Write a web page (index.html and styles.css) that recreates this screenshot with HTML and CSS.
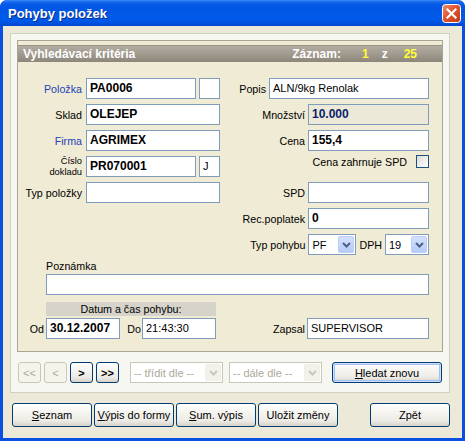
FILE: index.html
```html
<!DOCTYPE html>
<html lang="cs">
<head>
    <meta charset="UTF-8">
    <title>Pohyby položek</title>
    <link rel="stylesheet" href="styles.css">
</head>
<body>
    <div class="window">
        <div class="titlebar">
            <span class="title">Pohyby položek</span>
            <span class="close">
                <svg width="19" height="19" viewBox="0 0 19 19">
                    <defs>
                        <linearGradient id="cg" x1="0" y1="0" x2="1" y2="1">
                            <stop offset="0" stop-color="#f0906c"/>
                            <stop offset="0.45" stop-color="#e0532f"/>
                            <stop offset="1" stop-color="#c23a16"/>
                        </linearGradient>
                    </defs>
                    <rect x="0.5" y="0.5" width="18" height="18" rx="3" fill="url(#cg)" stroke="#fff"/>
                    <path d="M5.5 5.5 L13.5 13.5 M13.5 5.5 L5.5 13.5" stroke="#fff" stroke-width="2.2" stroke-linecap="square"/>
                </svg>
            </span>
        </div>

        <div class="client">
            <div class="frame">
                <div class="panel">
                    <div class="panel-head">
                        <span>Vyhledávací kritéria</span>
                        <span class="record">
                            <span>Záznam:</span>
                            <span class="yel one">1</span>
                            <span class="of">z</span>
                            <span class="yel total">25</span>
                        </span>
                    </div>

                    <div class="panel-body">
                        <div class="cols">
                            <div class="col-left">
                                <div class="row">
                                    <span class="lbl link">Položka</span>
                                    <div class="fld b w110">PA0006</div>
                                    <div class="fld w21 sp"></div>
                                </div>
                                <div class="row">
                                    <span class="lbl">Sklad</span>
                                    <div class="fld b w134">OLEJEP</div>
                                </div>
                                <div class="row">
                                    <span class="lbl link">Firma</span>
                                    <div class="fld b w134">AGRIMEX</div>
                                </div>
                                <div class="row">
                                    <span class="lbl small">Číslo<br>dokladu</span>
                                    <div class="fld b w110">PR070001</div>
                                    <div class="fld w21 sp">J</div>
                                </div>
                                <div class="row">
                                    <span class="lbl">Typ položky</span>
                                    <div class="fld w134"></div>
                                </div>
                            </div>

                            <div class="col-right">
                                <div class="row">
                                    <span class="rlbl">Popis</span>
                                    <div class="fld w160">ALN/9kg Renolak</div>
                                </div>
                                <div class="row">
                                    <span class="rlbl">Množství</span>
                                    <div class="fld b ro w121">10.000</div>
                                </div>
                                <div class="row">
                                    <span class="rlbl">Cena</span>
                                    <div class="fld b w121">155,4</div>
                                </div>
                                <div class="row check-row">
                                    <span class="rlbl">Cena zahrnuje SPD</span>
                                    <span class="check"></span>
                                </div>
                                <div class="row">
                                    <span class="rlbl">SPD</span>
                                    <div class="fld w121"></div>
                                </div>
                                <div class="row">
                                    <span class="rlbl">Rec.poplatek</span>
                                    <div class="fld b w121">0</div>
                                </div>
                                <div class="row">
                                    <span class="rlbl">Typ pohybu</span>
                                    <div class="combo w48">
                                        <span class="combo-text">PF</span>
                                        <span class="combo-btn">
                                            <svg width="9" height="6" viewBox="0 0 9 6"><path d="M1 1 L4.5 4.5 L8 1" fill="none" stroke="#4d6185" stroke-width="2"/></svg>
                                        </span>
                                    </div>
                                    <span class="rlbl dph">DPH</span>
                                    <div class="combo w44">
                                        <span class="combo-text">19</span>
                                        <span class="combo-btn">
                                            <svg width="9" height="6" viewBox="0 0 9 6"><path d="M1 1 L4.5 4.5 L8 1" fill="none" stroke="#4d6185" stroke-width="2"/></svg>
                                        </span>
                                    </div>
                                </div>
                            </div>
                        </div>

                        <div class="note">
                            <span class="note-lbl">Poznámka</span>
                            <div class="fld w383"></div>
                        </div>

                        <div class="dates-head">Datum a čas pohybu:</div>
                        <div class="dates">
                            <span class="dlbl od">Od</span>
                            <div class="fld b w74">30.12.2007</div>
                            <span class="dlbl do">Do</span>
                            <div class="fld w74">21:43:30</div>
                            <span class="dlbl zapsal">Zapsal</span>
                            <div class="fld w122">SUPERVISOR</div>
                        </div>
                    </div>
                </div>

                <div class="nav">
                    <button class="btn nav-btn" disabled>&lt;&lt;</button>
                    <button class="btn nav-btn" disabled>&lt;</button>
                    <button class="btn nav-btn on">&gt;</button>
                    <button class="btn nav-btn on">&gt;&gt;</button>
                    <div class="combo off sort">
                        <span class="combo-text">-- třídit dle --</span>
                        <span class="combo-btn">
                            <svg width="9" height="6" viewBox="0 0 9 6"><path d="M1 1 L4.5 4.5 L8 1" fill="none" stroke="#c9c7ba" stroke-width="2"/></svg>
                        </span>
                    </div>
                    <div class="combo off sort2">
                        <span class="combo-text">-- dále dle --</span>
                        <span class="combo-btn">
                            <svg width="9" height="6" viewBox="0 0 9 6"><path d="M1 1 L4.5 4.5 L8 1" fill="none" stroke="#c9c7ba" stroke-width="2"/></svg>
                        </span>
                    </div>
                    <button class="btn search"><u>H</u>ledat znovu</button>
                </div>
            </div>

            <div class="actions">
                <button class="btn act"><u>S</u>eznam</button>
                <button class="btn act"><u>V</u>ýpis do formy</button>
                <button class="btn act"><u>S</u>um. výpis</button>
                <button class="btn act">Uložit změny</button>
                <button class="btn act back">Zpět</button>
            </div>
        </div>
    </div>
</body>
</html>
```

FILE: styles.css
```css
* {
    margin: 0;
    padding: 0;
    box-sizing: border-box;
}

body {
    width: 465px;
    height: 441px;
    overflow: hidden;
    font-family: 'Liberation Sans', Arial, sans-serif;
    font-size: 11px;
    color: #000;
    background: #fff;
}

.window {
    width: 465px;
    height: 441px;
    display: flex;
    flex-direction: column;
    background: #0a50e0;
    border-radius: 7px 7px 0 0;
    overflow: hidden;
}

/* title bar */

.titlebar {
    height: 26px;
    display: flex;
    align-items: center;
    justify-content: space-between;
    padding: 0 4px 0 8px;
    background: linear-gradient(to bottom, #3d8cf8 0px, #1667ee 2px, #0358e4 5px, #0057e6 12px, #005bea 19px, #0052e0 23px, #0046cf 26px);
}

.title {
    color: #fff;
    font-size: 13px;
    font-weight: bold;
    text-shadow: 1px 1px 0 #0b2a8a;
    margin-top: 1px;
}

.close {
    width: 19px;
    height: 19px;
    display: flex;
}

/* client area */

.client {
    flex: 1;
    margin: 0 3px 3px;
    background: #ece9d8;
    padding: 7px 0 0 7px;
}

.frame {
    width: 440px;
    height: 360px;
    border: 1px solid #d0d0bf;
    background: #f7f7f2;
    padding: 6px 6px 0;
}

.panel {
    height: 312px;
    border: 1px solid #a8a594;
    background: #efebd5;
    padding-top: 4px;
}

.panel-head {
    height: 17px;
    display: flex;
    align-items: center;
    justify-content: space-between;
    padding: 0 25px 0 5px;
    background: linear-gradient(to bottom, #7d776d 0px, #b3ac a2 1px, #a39c91 8px, #8d867b 17px);
    background: linear-gradient(to bottom, #7d776d 0px, #b3aca2 1px, #a39c91 8px, #8d867b 17px);
    color: #fff;
    font-size: 12px;
    font-weight: bold;
}

.record {
    display: flex;
}

.yel {
    color: #ffff33;
}

.one {
    margin-left: 21px;
}

.of {
    margin-left: 13px;
}

.total {
    margin-left: 16px;
}

.panel-body {
    padding-top: 16px;
}

.cols {
    display: flex;
}

.col-left {
    width: 202px;
    display: flex;
    flex-direction: column;
    gap: 5px;
}

.col-right {
    flex: 1;
    padding-right: 13px;
    display: flex;
    flex-direction: column;
    gap: 5px;
}

.row {
    height: 21px;
    display: flex;
    align-items: center;
}

.col-right .row {
    justify-content: flex-end;
}

.lbl {
    width: 68px;
    padding-right: 4px;
    text-align: right;
    font-size: 10.7px;
}

.lbl.small {
    font-size: 9.3px;
    line-height: 11px;
    margin-top: 1px;
}

.link {
    color: #2442b5;
}

.rlbl {
    padding-right: 3px;
    font-size: 10.7px;
}

.rlbl.dph {
    padding-left: 3px;
}

.check-row {
    align-items: flex-start;
}

.check-row .rlbl {
    line-height: 13px;
}

.check {
    width: 13px;
    height: 13px;
    margin-left: 6px;
    margin-top: -1px;
    border: 1px solid #1c5180;
    background: linear-gradient(135deg, #dcdcd6, #fff);
}

/* text fields */

.fld {
    height: 21px;
    border: 1px solid #7f9db9;
    background: #fff;
    padding: 0 3px;
    line-height: 19px;
    font-size: 11px;
    white-space: nowrap;
    overflow: hidden;
}

.fld.b {
    font-weight: bold;
    font-size: 12px;
}

.fld.ro {
    background: #ece9d8;
    color: #0a1e6e;
}

.sp {
    margin-left: 3px;
}

.w21 { width: 21px; }
.w44 { width: 44px; }
.w48 { width: 48px; }
.w74 { width: 74px; }
.w110 { width: 110px; }
.w121 { width: 121px; }
.w122 { width: 122px; }
.w134 { width: 134px; }
.w160 { width: 160px; }
.w383 { width: 383px; }

/* combo boxes */

.combo {
    height: 21px;
    display: flex;
    align-items: center;
    border: 1px solid #7f9db9;
    background: #fff;
    padding: 1px;
}

.combo-text {
    flex: 1;
    padding-left: 2px;
    font-size: 11px;
    white-space: nowrap;
    overflow: hidden;
}

.combo-btn {
    width: 16px;
    height: 17px;
    display: flex;
    align-items: center;
    justify-content: center;
    border: 1px solid #bccdf6;
    border-radius: 2px;
    background: linear-gradient(to bottom, #d4e1fd, #b6cbf8);
}

.combo.off {
    border-color: #c9c7ba;
    color: #aca899;
}

.combo.off .combo-btn {
    border-color: #efeee8;
    background: #f2f1ea;
}

/* notes and dates */

.note {
    margin: 4px 0 0 28px;
}

.note-lbl {
    display: block;
    height: 15px;
    line-height: 15px;
    font-size: 10.7px;
}

.dates-head {
    width: 170px;
    height: 14px;
    margin: 7px 0 0 28px;
    background: #d6d3ca;
    text-align: center;
    line-height: 14px;
    font-size: 10.7px;
}

.dates {
    height: 21px;
    margin-top: 2px;
    display: flex;
    align-items: center;
    padding-right: 13px;
}

.dlbl {
    font-size: 10.7px;
    text-align: right;
}

.od {
    width: 28px;
    padding-right: 2px;
}

.do {
    width: 22px;
    padding-right: 1px;
}

.zapsal {
    margin-left: auto;
    padding-right: 2px;
}

/* buttons */

.btn {
    font-family: 'Liberation Sans', Arial, sans-serif;
    font-size: 11px;
    color: #000;
    border: 1px solid #003c74;
    border-radius: 3px;
    background: linear-gradient(to bottom, #ffffff 0%, #f6f5f0 35%, #ecebe6 75%, #d8d3c8 100%);
}

.nav {
    display: flex;
    align-items: center;
    margin: 10px 0 0 1px;
}

.nav-btn {
    width: 23px;
    height: 21px;
    margin-right: 3px;
}

.nav-btn:disabled {
    border-color: #c9c7ba;
    background: #f5f4ea;
    color: #aca899;
}

.nav-btn.on {
    font-weight: bold;
}

.sort {
    width: 93px;
    margin-left: 8px;
}

.sort2 {
    width: 93px;
    margin-left: 6px;
}

.search {
    width: 110px;
    height: 21px;
    margin-left: 10px;
    box-shadow: inset 0 0 0 1px #cee0fd, inset 0 0 0 2px #a3bff2;
}

.actions {
    display: flex;
    gap: 2px;
    margin: 10px 0 0 2px;
}

.act {
    width: 80px;
    height: 24px;
}

.back {
    margin-left: 30px;
}
```
